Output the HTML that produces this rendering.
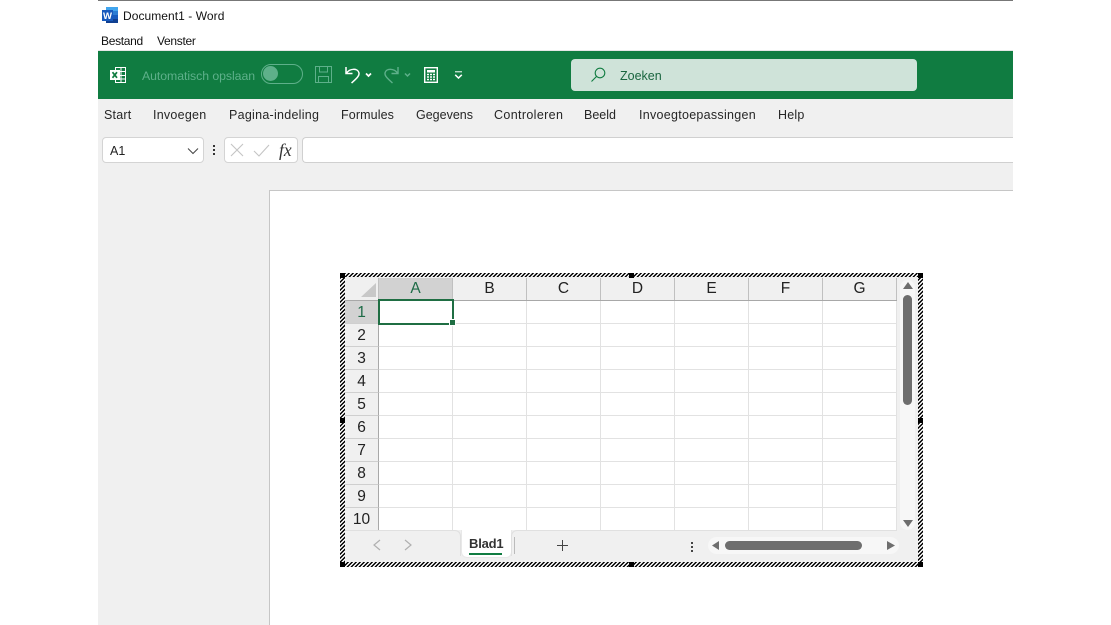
<!DOCTYPE html>
<html><head><meta charset="utf-8"><style>
html,body{margin:0;padding:0;background:#fff}
body{width:1111px;height:625px;position:relative;overflow:hidden;font-family:"Liberation Sans",sans-serif;color:#222}
.a{position:absolute}
.t{position:absolute;font-size:12.5px;line-height:16px;white-space:nowrap}
.tab{position:absolute;top:107px;font-size:12.5px;line-height:16px;white-space:nowrap;color:#262626}
.ch,.rh{position:absolute;font-size:15.5px;text-align:center;color:#222;background:#f0f0f0}
.ch{top:278px;height:22px;line-height:22px;width:73px;border-right:1px solid #c0c0c0}
.rh{left:345px;width:33px;height:22px;line-height:23px;border-right:1px solid #a8a8a8;border-bottom:1px solid #cfcfcf}
.vl{position:absolute;top:301px;height:229px;width:1px;background:#e2e2e2}
.hl{position:absolute;left:379px;width:518px;height:1px;background:#e2e2e2}
.h{position:absolute;width:5px;height:5px;background:#000}
</style></head><body>
<div class="a" style="left:98px;top:0;width:915px;height:1px;background:#777"></div>
<svg class="a" style="left:102px;top:7px" width="17" height="16" viewBox="0 0 17 16"><rect x="4" y="0" width="12" height="4" fill="#41a5ee"/><rect x="4" y="4" width="12" height="4" fill="#2b7cd3"/><rect x="4" y="8" width="12" height="4" fill="#185abd"/><rect x="4" y="12" width="12" height="4" fill="#103f91"/><rect x="0" y="3" width="11" height="11" fill="#185abd"/><text x="1" y="12" font-size="9.5" font-weight="bold" fill="#fff" font-family="Liberation Sans" textLength="9" lengthAdjust="spacingAndGlyphs">W</text></svg>
<div class="t" style="left:123px;top:8px;font-size:12px;color:#111;letter-spacing:.06px">Document1 - Word</div>
<div class="t" style="left:101px;top:33px;font-size:12px;color:#111;letter-spacing:-.3px">Bestand</div>
<div class="t" style="left:157px;top:33px;font-size:12px;color:#111;letter-spacing:-.3px">Venster</div>
<div class="a" style="left:98px;top:50px;width:915px;height:1px;background:#e6e6e6"></div>
<div class="a" style="left:98px;top:51px;width:915px;height:48px;background:#107c41"></div>
<svg class="a" style="left:109px;top:66px" width="18" height="18" viewBox="0 0 18 18"><path d="M6.5 1.5H16.5V16.5H6.5Z M6.5 5.5H16.5 M6.5 9.5H16.5 M6.5 13H16.5 M12 1.5V16.5" fill="none" stroke="#fff"/><rect x="1" y="4" width="10" height="10" fill="#fff"/><path d="M3.5 6.2L8 11.8M8 6.2L3.5 11.8" stroke="#107c41" stroke-width="1.7"/></svg>
<div class="t" style="left:142px;top:68px;color:#5eb08a;font-size:12.3px;letter-spacing:-.06px">Automatisch opslaan</div>
<div class="a" style="left:261px;top:64px;width:40px;height:18px;border:1px solid #5eb08a;border-radius:10px"></div>
<div class="a" style="left:263px;top:66px;width:15px;height:15px;border-radius:50%;background:#5eb08a"></div>
<svg class="a" style="left:315px;top:66px" width="17" height="17" viewBox="0 0 17 17" fill="none" stroke="#5eb08a"><path d="M.5 .5H16.5V16.5H.5Z M4.5 .5V6H12.5V.5 M3.5 16.5V10.5H13.5V16.5"/></svg>
<svg class="a" style="left:343px;top:65px" width="30" height="20" viewBox="0 0 30 20" fill="none" stroke="#fff" stroke-width="1.5"><path d="M3 2V8.5H9.5 M3 8.5C7 3 15 3 16 8C16.5 11 13 14 8.5 18"/><path d="M23 8.5L25.5 11L28 8.5" stroke-width="1.7"/></svg>
<svg class="a" style="left:383px;top:65px" width="30" height="20" viewBox="0 0 30 20" fill="none" stroke="#5eb08a" stroke-width="1.4"><path d="M15 2V8.5H8.5 M15 8.5C11 3 3 3 2 8C1.5 11 5 14 9.5 18"/><path d="M22 8.5L24.5 11L27 8.5" stroke-width="1.5"/></svg>
<svg class="a" style="left:424px;top:67px" width="14" height="16" viewBox="0 0 14 16" fill="none" stroke="#fff"><rect x=".7" y=".7" width="12.6" height="14.6" stroke-width="1.4"/><rect x="3" y="3" width="8" height="2.5" fill="#fff" stroke="none"/><path d="M3 7.5H5M6 7.5H8M9 7.5H11M3 10H5M6 10H8M9 10H11M3 12.5H5M6 12.5H8M9 12.5H11" stroke-width="1.5"/></svg>
<svg class="a" style="left:454px;top:71px" width="9" height="8" viewBox="0 0 9 8" fill="none" stroke="#fff"><path d="M1 .8H8"/><path d="M1.2 3.8L4.5 7L7.8 3.8" stroke-width="1.5"/></svg>
<div class="a" style="left:571px;top:59px;width:346px;height:32px;background:#cfe3d9;border-radius:4px"></div>
<svg class="a" style="left:590px;top:66px" width="18" height="17" viewBox="0 0 18 17" fill="none" stroke="#107c41" stroke-width="1.1"><circle cx="10" cy="7" r="4.8"/><path d="M6.6 10.4L1.5 15.5"/></svg>
<div class="t" style="left:620px;top:68px;font-size:12.5px;color:#19653f">Zoeken</div>

<div class="a" style="left:98px;top:99px;width:915px;height:526px;background:#f0f0f0"></div>
<div class="tab" style="left:104px;letter-spacing:.2px">Start</div>
<div class="tab" style="left:153px;letter-spacing:.25px">Invoegen</div>
<div class="tab" style="left:229px;letter-spacing:.27px">Pagina-indeling</div>
<div class="tab" style="left:341px;letter-spacing:.12px">Formules</div>
<div class="tab" style="left:416px">Gegevens</div>
<div class="tab" style="left:494px;letter-spacing:.36px">Controleren</div>
<div class="tab" style="left:584px">Beeld</div>
<div class="tab" style="left:639px;letter-spacing:.28px">Invoegtoepassingen</div>
<div class="tab" style="left:778px;letter-spacing:.2px">Help</div>

<div class="a" style="left:102px;top:137px;width:100px;height:24px;background:#fff;border:1px solid #d4d4d4;border-radius:4px"></div>
<div class="t" style="left:110px;top:143px;font-size:12.5px;color:#222">A1</div>
<svg class="a" style="left:187px;top:147px" width="12" height="8" viewBox="0 0 12 8" fill="none" stroke="#444"><path d="M1 1.5L6 6.5L11 1.5"/></svg>
<div class="a" style="left:213px;top:145px;width:2px;height:2px;background:#333;box-shadow:0 4px #333,0 8px #333"></div>
<div class="a" style="left:224px;top:137px;width:72px;height:24px;background:#fff;border:1px solid #d4d4d4;border-radius:4px"></div>
<svg class="a" style="left:230px;top:143px" width="44" height="14" viewBox="0 0 44 14" fill="none" stroke="#c4c4c4" stroke-width="1.1"><path d="M1 1L13 13M13 1L1 13"/><path d="M24 8L29 13L39 2"/></svg>
<div class="t" style="left:279px;top:141px;font:italic 17.5px/18px 'Liberation Serif',serif;color:#333">fx</div>
<div class="a" style="left:302px;top:137px;width:711px;height:26px;background:#fff;border:1px solid #d0d0d0;border-right:0;border-radius:4px 0 0 4px;box-sizing:border-box"></div>
<div class="a" style="left:269px;top:190px;width:744px;height:435px;background:#fff;border-top:1px solid #c6c6c6;border-left:1px solid #c6c6c6;box-sizing:border-box"></div>

<svg class="a" style="left:340px;top:273px" width="583" height="294"><defs><pattern id="p" width="4" height="4" patternUnits="userSpaceOnUse"><path d="M0 0H2L0 2Z M4 0V2L2 4H0Z" fill="#000" shape-rendering="crispEdges"/></pattern></defs><rect width="583" height="294" fill="#fff"/><rect width="583" height="294" fill="url(#p)"/></svg>
<div class="a" style="left:345px;top:277px;width:573px;height:285px;background:#f0f0f0"></div>
<div class="a" style="left:379px;top:301px;width:518px;height:229px;background:#fff"></div>

<svg class="a" style="left:360px;top:282px" width="17" height="16"><path d="M16 1V15H1Z" fill="#c8c8c8"/></svg>
<div class="a" style="left:378px;top:278px;width:1px;height:22px;background:#c0c0c0"></div>
<div class="ch" style="left:379px;background:#d2d2d2;color:#1d6b46">A</div>
<div class="ch" style="left:453px">B</div>
<div class="ch" style="left:527px">C</div>
<div class="ch" style="left:601px">D</div>
<div class="ch" style="left:675px">E</div>
<div class="ch" style="left:749px">F</div>
<div class="ch" style="left:823px">G</div>
<div class="a" style="left:345px;top:300px;width:552px;height:1px;background:#a8a8a8"></div>

<div class="rh" style="top:301px;background:#d2d2d2;color:#1d6b46">1</div>
<div class="rh" style="top:324px">2</div>
<div class="rh" style="top:347px">3</div>
<div class="rh" style="top:370px">4</div>
<div class="rh" style="top:393px">5</div>
<div class="rh" style="top:416px">6</div>
<div class="rh" style="top:439px">7</div>
<div class="rh" style="top:462px">8</div>
<div class="rh" style="top:485px">9</div>
<div class="rh" style="top:508px;height:22px;border-bottom:0">10</div>

<div class="vl" style="left:452px"></div><div class="vl" style="left:526px"></div><div class="vl" style="left:600px"></div><div class="vl" style="left:674px"></div><div class="vl" style="left:748px"></div><div class="vl" style="left:822px"></div><div class="vl" style="left:896px"></div>
<div class="hl" style="top:323px"></div><div class="hl" style="top:346px"></div><div class="hl" style="top:369px"></div><div class="hl" style="top:392px"></div><div class="hl" style="top:415px"></div><div class="hl" style="top:438px"></div><div class="hl" style="top:461px"></div><div class="hl" style="top:484px"></div><div class="hl" style="top:507px"></div>

<div class="a" style="left:378px;top:299px;width:72px;height:22px;border:2px solid #1f6e43"></div>
<div class="a" style="left:449px;top:319px;width:5px;height:5px;background:#1f6e43;border:1px solid #fff"></div>

<div class="a" style="left:461px;top:530px;width:51px;height:28px;background:#fff;border:1px solid #e8e8e8;border-top:0;border-radius:0 0 6px 6px;box-sizing:border-box"></div>
<div class="a" style="left:345px;top:530px;width:116px;height:26px;background:#f0f0f0;border-top:1px solid #e0e0e0;border-right:1px solid #e0e0e0;border-radius:0 6px 0 0;box-sizing:border-box"></div>
<div class="a" style="left:511px;top:530px;width:386px;height:26px;background:#f0f0f0;border-top:1px solid #e0e0e0;border-left:1px solid #e0e0e0;border-radius:6px 0 0 0;box-sizing:border-box"></div>
<div class="t" style="left:469px;top:536px;font-size:13px;font-weight:bold;color:#333;letter-spacing:-.2px">Blad1</div>
<div class="a" style="left:469px;top:553px;width:33px;height:2px;background:#107c41"></div>
<div class="a" style="left:514px;top:537px;width:1px;height:17px;background:#bbb"></div>
<svg class="a" style="left:372px;top:539px" width="50" height="12" viewBox="0 0 50 12" fill="none" stroke="#b0b0b0" stroke-width="1.2"><path d="M8 1L2 6L8 11"/><path d="M33 1L39 6L33 11"/></svg>
<svg class="a" style="left:557px;top:540px" width="11" height="11" stroke="#444"><path d="M5.5 0V11M0 5.5H11"/></svg>
<div class="a" style="left:691px;top:542px;width:2px;height:2px;background:#444;box-shadow:0 4px #444,0 8px #444"></div>
<div class="a" style="left:708px;top:537px;width:191px;height:17px;background:#f7f7f7;border-radius:9px"></div>
<div class="a" style="left:725px;top:541px;width:137px;height:9px;background:#6e6e6e;border-radius:5px"></div>
<svg class="a" style="left:712px;top:540px" width="184" height="11" fill="#6e6e6e"><path d="M0 5.5L7 1V10Z"/><path d="M183 5.5L175 1V10Z"/></svg>
<div class="a" style="left:900px;top:280px;width:15px;height:250px;background:#f7f7f7;border-radius:8px"></div>
<div class="a" style="left:903px;top:295px;width:9px;height:110px;background:#6e6e6e;border-radius:5px"></div>
<svg class="a" style="left:902px;top:282px" width="12" height="246" fill="#6e6e6e"><path d="M6 0L11 7H1Z"/><path d="M6 245L1 238H11Z"/></svg>

<div class="h" style="left:340px;top:273px"></div><div class="h" style="left:629px;top:273px"></div><div class="h" style="left:918px;top:273px"></div>
<div class="h" style="left:340px;top:418px"></div><div class="h" style="left:918px;top:418px"></div>
<div class="h" style="left:340px;top:562px"></div><div class="h" style="left:629px;top:562px"></div><div class="h" style="left:918px;top:562px"></div>
</body></html>
